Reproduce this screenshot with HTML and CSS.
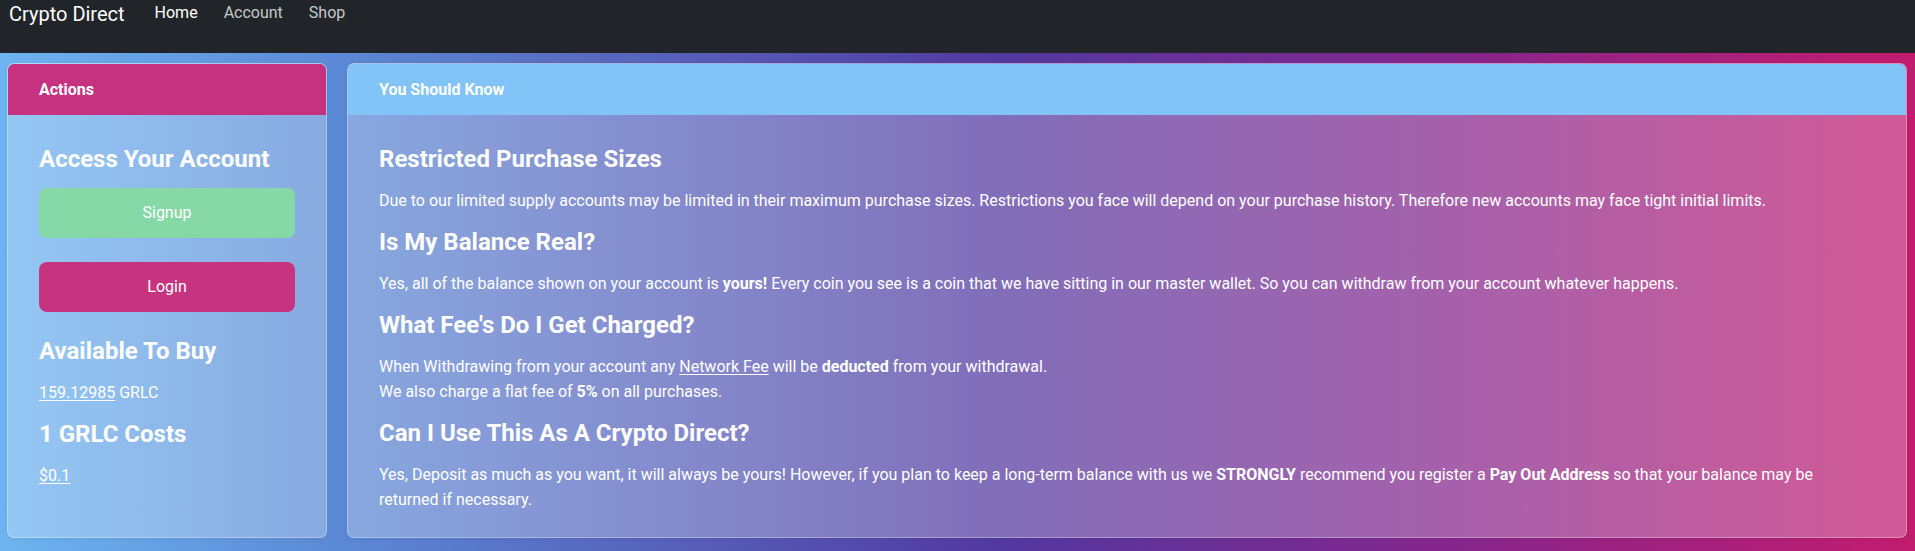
FILE: index.html
```html
<!DOCTYPE html>
<html lang="en">
<head>
<meta charset="utf-8">
<title>Crypto Direct</title>
<link rel="stylesheet" href="styles.css">
</head>
<body>
<nav class="navbar">
  <a class="brand" href="#">Crypto Direct</a>
  <ul class="nav">
    <li><a class="nav-link active" href="#">Home</a></li>
    <li><a class="nav-link" href="#">Account</a></li>
    <li><a class="nav-link" href="#">Shop</a></li>
  </ul>
</nav>
<main class="page">
  <section class="card card-actions">
    <div class="card-header header-pink">Actions</div>
    <div class="card-body">
      <h4 class="title">Access Your Account</h4>
      <a class="btn btn-green" href="#">Signup</a>
      <a class="btn btn-pink" href="#">Login</a>
      <h4 class="title">Available To Buy</h4>
      <p class="text"><a class="link" href="#">159.12985</a> GRLC</p>
      <h4 class="title">1 GRLC Costs</h4>
      <p class="text"><a class="link" href="#">$0.1</a></p>
    </div>
  </section>
  <section class="card card-info">
    <div class="card-header header-blue">You Should Know</div>
    <div class="card-body">
      <h4 class="title">Restricted Purchase Sizes</h4>
      <p class="text">Due to our limited supply accounts may be limited in their maximum purchase sizes. Restrictions you face will depend on your purchase history. Therefore new accounts may face tight initial limits.</p>
      <h4 class="title">Is My Balance Real?</h4>
      <p class="text">Yes, all of the balance shown on your account is <strong>yours!</strong> Every coin you see is a coin that we have sitting in our master wallet. So you can withdraw from your account whatever happens.</p>
      <h4 class="title">What Fee's Do I Get Charged?</h4>
      <p class="text"><span class="line">When Withdrawing from your account any <a class="link" href="#">Network Fee</a> will be <strong>deducted</strong> from your withdrawal.</span><span class="line">We also charge a flat fee of <strong>5%</strong> on all purchases.</span></p>
      <h4 class="title">Can I Use This As A Crypto Direct?</h4>
      <p class="text last"><span class="line">Yes, Deposit as much as you want, it will always be yours! However, if you plan to keep a long-term balance with us we <strong>STRONGLY</strong> recommend you register a <strong>Pay Out Address</strong> so that your balance may be</span><span class="line">returned if necessary.</span></p>
    </div>
  </section>
</main>
</body>
</html>
```
FILE: styles.css
```css
html, body {
  margin: 0;
  padding: 0;
}

body {
  min-height: 100vh;
  font-family: Roboto, "Liberation Sans", sans-serif;
  font-size: 16px;
  color: #fff;
  background: linear-gradient(to right, #6db4f0 0%, #5b88d4 18%, #5239a0 52%, #86268c 76%, #c21c6e 100%);
}

a {
  color: inherit;
  text-decoration: none;
}

.navbar {
  display: flex;
  align-items: flex-start;
  height: 53px;
  padding: 0 0 0 9px;
  box-sizing: border-box;
  background: #212529;
}

.brand {
  font-size: 20px;
  line-height: 28px;
  color: #fff;
  margin-right: 17px;
}

.nav {
  display: flex;
  list-style: none;
  margin: 0;
  padding: 0;
}

.nav-link {
  display: block;
  padding: 1px 13px 0;
  line-height: 24px;
  color: rgba(255, 255, 255, 0.75);
}

.nav-link.active {
  color: #fff;
}

.page {
  display: flex;
  align-items: stretch;
  gap: 20px;
  padding: 10px 8px 13px 7px;
}

.card {
  display: flex;
  flex-direction: column;
  border: 1px solid rgba(255, 255, 255, 0.3);
  border-radius: 7px;
  overflow: hidden;
  background: rgba(255, 255, 255, 0.27);
  box-shadow: 0 1px 4px rgba(0, 0, 0, 0.06);
}

.card-actions {
  width: 320px;
  flex: none;
  box-sizing: border-box;
}

.card-info {
  flex: 1;
}

.card-header {
  padding: 14px 31px 13px;
  font-size: 16px;
  line-height: 24px;
  font-weight: 700;
}

.header-pink {
  background: #c6327f;
}

.header-blue {
  background: #82c4f7;
}

.card-body {
  flex: 1;
  padding: 30px 31px 25px;
}

.title {
  margin: 0 0 14px;
  font-size: 24px;
  line-height: 29px;
  font-weight: 700;
}

.text {
  margin: 0 0 15px;
  line-height: 25px;
}

.text.last {
  margin-bottom: 0;
}

.line {
  display: block;
}

.text strong {
  font-weight: 700;
}

.link {
  text-decoration: underline;
  text-underline-offset: 2px;
}

.btn {
  display: block;
  height: 50px;
  line-height: 50px;
  margin-bottom: 24px;
  border-radius: 8px;
  text-align: center;
  font-size: 16px;
  color: #fff;
}

.btn-green {
  background: #87d8a7;
}

.btn-pink {
  margin-bottom: 25px;
  background: #c6337f;
}
```
